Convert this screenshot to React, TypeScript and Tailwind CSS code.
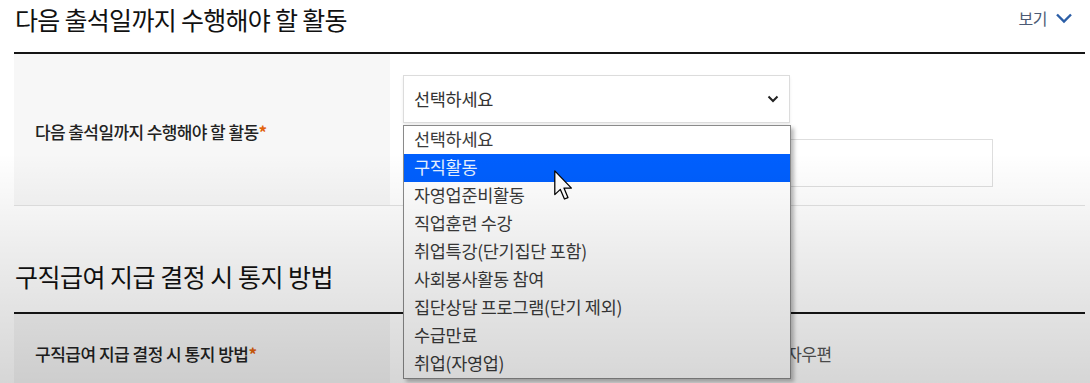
import React from "react";

const items = [
  "선택하세요",
  "구직활동",
  "자영업준비활동",
  "직업훈련 수강",
  "취업특강(단기집단 포함)",
  "사회봉사활동 참여",
  "집단상담 프로그램(단기 제외)",
  "수급만료",
  "취업(자영업)",
];

function Cursor() {
  return (
    <svg width="19" height="31" viewBox="0 0 12 19.5" className="absolute left-[150px] top-[16px]">
      <path
        d="M0.5 0.5 L0.5 15.5 L4 12.2 L6.6 18.3 L8.8 17.4 L6.3 11.4 L11 11.4 Z"
        fill="#ffffff"
        stroke="#000000"
        strokeWidth="0.8"
        strokeLinejoin="round"
      />
    </svg>
  );
}

export default function App() {
  const font = { fontFamily: '"Noto Sans CJK KR", "Noto Sans", sans-serif' };
  return (
    <div className="relative w-[1090px] h-[383px] overflow-hidden bg-white" style={font}>
      <div className="pl-[14px] pr-[5px]">
        {/* Header 1 */}
        <div className="h-[52px] flex items-start justify-between">
          <h2 className="pt-[4px] pl-[1px] text-[25px] leading-[30px] tracking-[-0.7px] text-[#111]">
            다음 출석일까지 수행해야 할 활동
          </h2>
          <div className="pt-[5px] pr-[12px] flex items-center gap-[8px]">
            <span className="text-[16px] leading-[26px] text-[#4c5a74] tracking-[-0.5px]">보기</span>
            <svg width="18" height="12" viewBox="0 0 18 12">
              <path d="M2 2.5 L9 9.5 L16 2.5" fill="none" stroke="#2b5ea6" strokeWidth="2.4" />
            </svg>
          </div>
        </div>
        <div className="h-[2px] bg-[#151515]" />

        {/* Row 1 */}
        <div className="flex h-[152px] border-b border-[#e3e3e3]">
          <div className="w-[376px] bg-[#f7f7f7] flex items-center pl-[21px] pt-[4px]">
            <span className="text-[17px] font-medium text-[#222] tracking-[-0.6px]">
              다음 출석일까지 수행해야 할 활동<span className="text-[#e2620c] font-bold">*</span>
            </span>
          </div>
          <div className="relative flex-1 pl-[13px] pt-[21px] flex flex-col gap-[16px]">
            <div className="w-[387px] h-[48px] border border-[#dcdcdc] bg-white flex items-center justify-between pl-[10px] pr-[10px] shadow-[0_2px_3px_rgba(0,0,0,0.08)]">
              <span className="text-[17.5px] text-[#333] tracking-[-0.3px]">선택하세요</span>
              <svg width="12" height="8" viewBox="0 0 12 8">
                <path d="M1.5 1.5 L6 6 L10.5 1.5" fill="none" stroke="#222" strokeWidth="2" />
              </svg>
            </div>
            <div className="w-[590px] h-[48px] border border-[#dedede] bg-white" />

            {/* dropdown list */}
            <div className="absolute left-[13px] top-[71px] w-[388px] border border-[#8a8a8a] bg-white shadow-[3px_3px_4px_rgba(0,0,0,0.28)] z-10">
              {items.map((it, i) => (
                <div
                  key={it}
                  className={
                    i === 1
                      ? "relative h-[28px] leading-[26px] pl-[10px] bg-[#005ffe] text-[#e4f0ff] text-[17.5px] tracking-[-0.3px]"
                      : "h-[28px] leading-[26px] pl-[10px] text-[#3a3a3a] text-[17.5px] tracking-[-0.3px]"
                  }
                >
                  {it}
                  {i === 1 && <Cursor />}
                </div>
              ))}
            </div>
          </div>
        </div>

        {/* Header 2 */}
        <div className="h-[106px] flex items-end pb-[21px]">
          <h2 className="pl-[1px] text-[25px] leading-[30px] tracking-[-0.5px] text-[#111]">
            구직급여 지급 결정 시 통지 방법
          </h2>
        </div>
        <div className="h-[2px] bg-[#151515]" />

        {/* Row 2 */}
        <div className="flex h-[90px]">
          <div className="w-[376px] bg-[#f5f5f5] pl-[21px] pt-[27px]">
            <span className="text-[17px] font-medium text-[#222] tracking-[-0.5px]">
              구직급여 지급 결정 시 통지 방법<span className="text-[#e2620c] font-bold">*</span>
            </span>
          </div>
          <div className="flex-1 pt-[27px] pl-[381px]">
            <span className="text-[17px] text-[#555] tracking-[-0.5px]">전자우편</span>
          </div>
        </div>
      </div>

      {/* video vignette */}
      <div className="pointer-events-none absolute inset-0 z-20 bg-[linear-gradient(to_bottom,rgba(0,0,0,0)_0%,rgba(0,0,0,0)_40%,rgba(0,0,0,0.07)_65%,rgba(0,0,0,0.16)_100%)]" />
    </div>
  );
}
